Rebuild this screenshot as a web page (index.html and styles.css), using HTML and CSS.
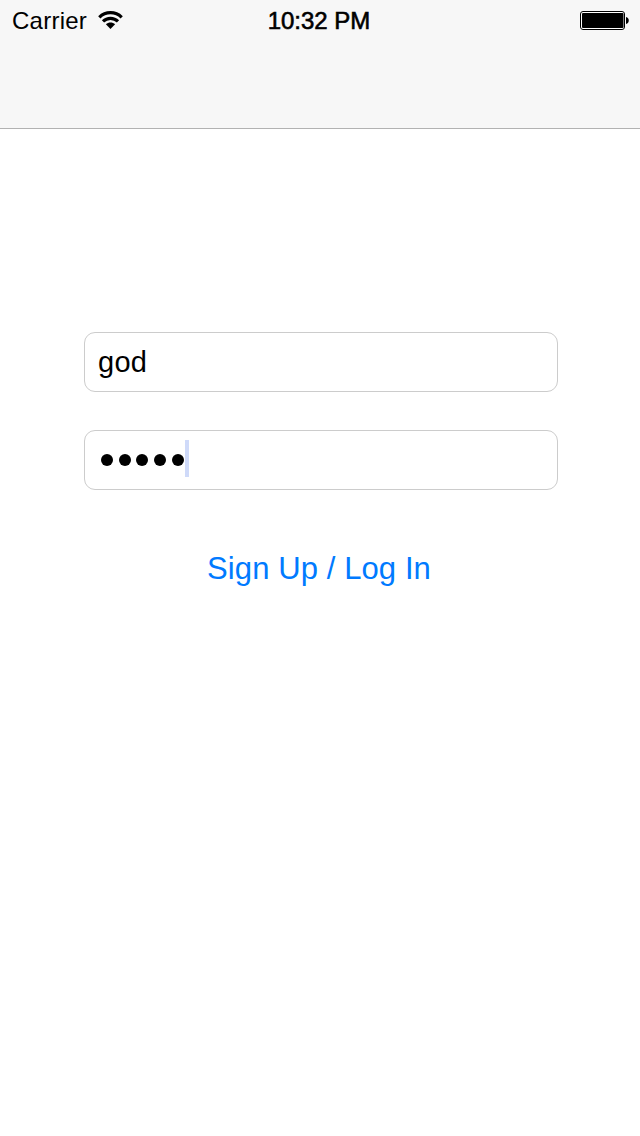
FILE: index.html
```html
<!DOCTYPE html>
<html lang="en">
<head>
<meta charset="utf-8">
<title>Log In</title>
<link rel="stylesheet" href="styles.css">
</head>
<body>
<header class="navbar">
  <div class="status">
    <div class="status-left">
      <span class="carrier">Carrier</span>
      <svg class="wifi" width="25" height="20" viewBox="0 0 25 20">
        <g fill="none" stroke="#000" stroke-width="3.2">
          <path d="M1.3 7.3C7.6 1.1 17.4 1.1 23.7 7.3"/>
          <path d="M5 11.4C9.2 7.3 15.8 7.3 20 11.4"/>
        </g>
        <path d="M7.9 14.2C10.5 11.8 14.5 11.8 17.1 14.2L12.5 18.9Z"/>
      </svg>
    </div>
    <span class="time">10:32 PM</span>
    <div class="status-right">
      <svg class="battery" width="50" height="20" viewBox="0 0 50 20">
        <rect x=".5" y=".5" width="44" height="18" rx="2.5" fill="#fff" stroke="#000"/>
        <rect x="2" y="2" width="41.5" height="15" rx="1"/>
        <path d="M46 6C49.7 6.7 49.7 12.3 46 13Z"/>
      </svg>
    </div>
  </div>
</header>
<main class="form">
  <div class="field"><span class="username">god</span></div>
  <div class="field">
    <span class="dots"><i class="dot"></i><i class="dot"></i><i class="dot"></i><i class="dot"></i><i class="dot"></i></span>
    <span class="caret"></span>
  </div>
  <a class="submit">Sign Up / Log In</a>
</main>
</body>
</html>
```
FILE: styles.css
```css
* { box-sizing: border-box; }
body {
  margin: 0;
  min-height: 1136px;
  background: #fff;
  color: #000;
  font-family: "Liberation Sans", Arial, sans-serif;
}
.navbar {
  height: 129px;
  background: #f7f7f7;
  border-bottom: 1px solid #b2b2b2;
}
.status {
  display: grid;
  grid-template-columns: 1fr auto 1fr;
  height: 40px;
  padding: 0 10px 0 12px;
}
.status-left { display: flex; align-items: flex-start; }
.carrier { width: 76px; font-size: 24px; line-height: 28px; margin-top: 7px; letter-spacing: 0.25px; white-space: nowrap; }
.wifi { margin: 10px 0 0 10px; }
.time {
  margin: 7px 4px 0 0;
  font-size: 24px;
  line-height: 28px;
  -webkit-text-stroke: 0.6px #000;
}
.status-right { display: flex; justify-content: flex-end; }
.battery { margin-top: 11px; }
.form {
  display: flex;
  flex-direction: column;
  width: 474px;
  margin: 203px 0 0 84px;
}
.field {
  display: flex;
  height: 60px;
  margin-bottom: 38px;
  padding: 0 13px;
  border: 1px solid #ccc;
  border-radius: 11px;
  background: #fff;
}
.username { font-size: 29px; line-height: 58px; letter-spacing: 0.3px; }
.dots { display: flex; gap: 5.8px; padding: 22.5px 0 0 2.8px; }
.dot { width: 12px; height: 12px; border-radius: 50%; background: #000; }
.caret { width: 4px; height: 37px; margin-top: 9px; margin-left: 1px; background: #cfdaf9; }
.submit {
  align-self: center;
  margin: 23px 4px 0 0;
  color: #007aff;
  font-size: 31px;
  line-height: 36px;
  letter-spacing: 0.1px;
}
```
